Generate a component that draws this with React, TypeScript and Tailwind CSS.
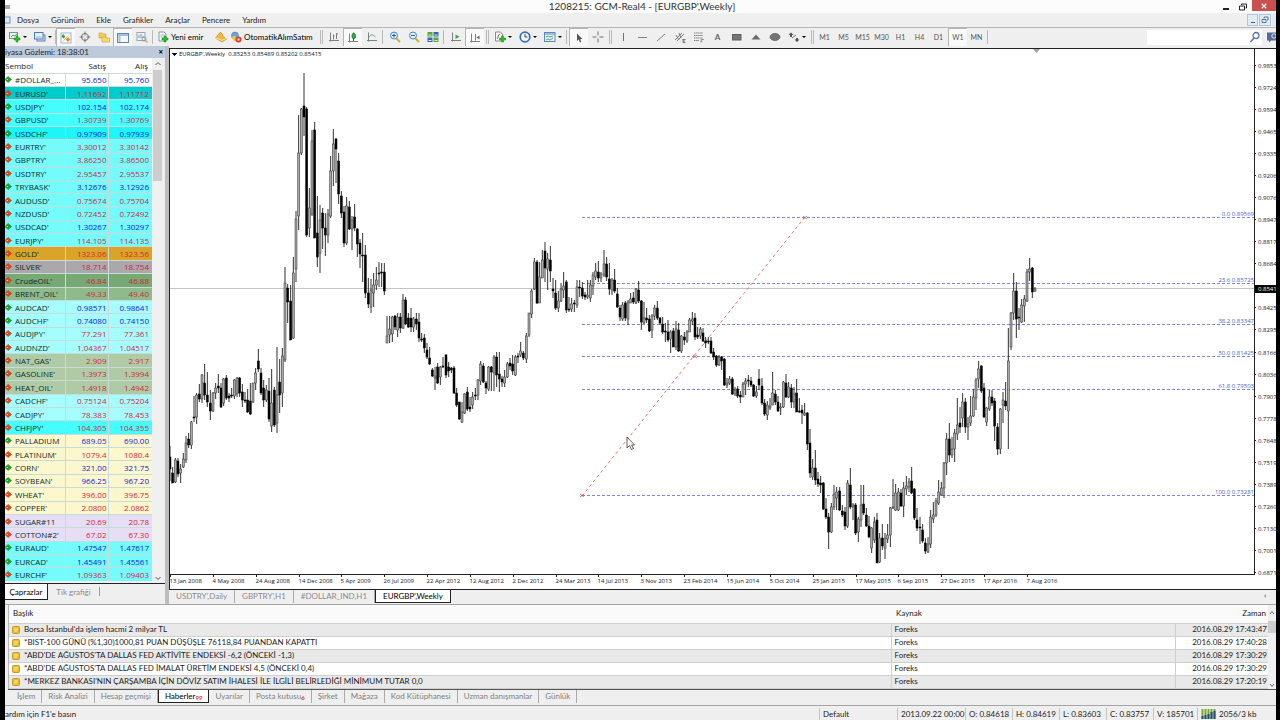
import React, { useState } from 'react';
import clsx from 'clsx';

// --- Market watch data ---
interface Quote {
  symbol: string;
  bid: string;
  ask: string;
  up: boolean;
  row: string;
}

const q = (symbol: string, bid: string, ask: string, up: boolean, row: string): Quote => ({
  symbol,
  bid,
  ask,
  up,
  row,
});

const CYAN = 'bg-[#46fdfd]';
const AQUA = 'bg-[#74fcfc]';
const PALE = 'bg-[#a6fdfd]';
const SAGE = 'bg-[#aecba6]';
const CREAM = 'bg-[#fdf7cd]';
const LILAC = 'bg-[#e5def5]';

const quotes: Quote[] = [
  q('#DOLLAR_...', '95.650', '95.760', true, 'bg-white'),
  q("EURUSD'", '1.11692', '1.11712', false, 'bg-[#00cccc]'),
  q("USDJPY'", '102.154', '102.174', true, CYAN),
  q("GBPUSD'", '1.30739', '1.30769', false, CYAN),
  q("USDCHF'", '0.97909', '0.97939', true, 'bg-[#1cf6f6]'),
  q("EURTRY'", '3.30012', '3.30142', false, AQUA),
  q("GBPTRY'", '3.86250', '3.86500', false, AQUA),
  q("USDTRY'", '2.95457', '2.95537', false, AQUA),
  q("TRYBASK'", '3.12676', '3.12926', true, AQUA),
  q("AUDUSD'", '0.75674', '0.75704', false, AQUA),
  q("NZDUSD'", '0.72452', '0.72492', false, AQUA),
  q("USDCAD'", '1.30267', '1.30297', true, AQUA),
  q("EURJPY'", '114.105', '114.135', false, AQUA),
  q("GOLD'", '1323.06', '1323.56', false, 'bg-[#d9a427]'),
  q("SILVER'", '18.714', '18.754', false, 'bg-[#aaa8aa]'),
  q("CrudeOIL'", '46.84', '46.88', false, 'bg-[#76a973]'),
  q("BRENT_OIL'", '49.33', '49.40', false, 'bg-[#8fba8b]'),
  q("AUDCAD'", '0.98571', '0.98641', true, PALE),
  q("AUDCHF'", '0.74080', '0.74150', true, PALE),
  q("AUDJPY'", '77.291', '77.361', false, PALE),
  q("AUDNZD'", '1.04367', '1.04517', false, PALE),
  q("NAT_GAS'", '2.909', '2.917', false, SAGE),
  q("GASOLINE'", '1.3973', '1.3994', false, SAGE),
  q("HEAT_OIL'", '1.4918', '1.4942', false, SAGE),
  q("CADCHF'", '0.75124', '0.75204', false, PALE),
  q("CADJPY'", '78.383', '78.453', false, PALE),
  q("CHFJPY'", '104.305', '104.355', false, CYAN),
  q('PALLADIUM', '689.05', '690.00', true, CREAM),
  q("PLATINUM'", '1079.4', '1080.4', false, CREAM),
  q("CORN'", '321.00', '321.75', true, CREAM),
  q("SOYBEAN'", '966.25', '967.20', true, CREAM),
  q("WHEAT'", '396.00', '396.75', false, CREAM),
  q("COPPER'", '2.0800', '2.0862', false, CREAM),
  q('SUGAR#11', '20.69', '20.78', false, LILAC),
  q("COTTON#2'", '67.02', '67.30', false, LILAC),
  q("EURAUD'", '1.47547', '1.47617', true, AQUA),
  q("EURCAD'", '1.45491', '1.45561', true, AQUA),
  q("EURCHF'", '1.09363', '1.09403', false, AQUA),
];

// --- Weekly candles: high, low, open, close (chart y, smaller is higher) ---
const candles: number[][] = [
  [446,481,457,469],[467,483,473,483],[458,483,482,460],[458,477,461,474],[464,483,473,469],[453,468,467,459],
  [436,463,460,443],[433,448,439,445],[421,449,445,422],[396,422,417,418],[393,424,417,395],[384,402,394,399],
  [374,403,399,375],[364,400,383,395],[372,407,395,402],[390,420,403,411],[392,412,411,393],[383,399,393,388],
  [374,393,386,388],[383,408,388,407],[378,406,403,379],[375,400,378,398],[393,402,396,398],[388,398,395,396],
  [379,399,396,380],[377,397,394,378],[377,397,378,393],[384,407,392,400],[392,403,400,401],[389,413,400,412],
  [383,415,401,414],[383,403,402,383],[368,390,383,373],[349,372,361,369],[368,395,373,393],[380,407,388,400],
  [385,402,400,390],[378,422,391,419],[369,432,426,403],[387,427,390,425],[347,433,423,395],[359,413,382,395],
  [348,407,393,356],[267,362,360,283],[284,323,288,302],[285,340,301,340],[257,339,338,273],[211,282,269,219],
  [115,230,216,153],[108,155,153,109],[73,136,106,117],[107,237,109,235],[188,237,228,208],[130,216,214,141],
  [122,238,130,238],[196,267,233,257],[205,273,253,220],[208,249,213,228],[213,256,228,235],[209,243,235,214],
  [156,218,216,171],[129,186,171,144],[138,183,139,149],[153,204,161,194],[191,218,196,213],[206,247,212,243],
  [197,245,243,206],[201,230,207,229],[216,250,229,220],[204,231,217,228],[228,257,229,244],[239,268,243,254],
  [233,282,255,256],[245,298,255,293],[278,308,293,304],[279,313,307,290],[273,307,293,285],[267,290,285,280],
  [262,287,273,274],[263,287,272,273],[263,295,272,291],[316,343,343,336],[316,343,335,329],[316,342,334,317],
  [315,330,316,327],[313,337,330,317],[313,333,317,328],[294,329,328,300],[297,325,300,324],[313,328,318,327],
  [308,332,318,327],[317,332,327,319],[313,330,319,324],[313,342,322,338],[333,342,339,340],[334,353,338,348],
  [343,359,350,357],[347,365,358,364],[368,377,370,376],[367,390,378,376],[363,384,367,383],[366,385,377,367],
  [357,368,366,367],[354,378,355,375],[362,377,367,371],[367,373,368,370],[366,394,368,393],[388,407,393,405],
  [402,420,402,419],[402,423,422,412],[393,414,413,394],[387,411,392,409],[397,412,407,409],[392,409,405,397],
  [388,400,395,396],[379,400,395,380],[361,385,381,364],[363,383,366,382],[381,394,383,388],[366,391,389,367],
  [366,391,367,372],[355,391,373,357],[352,387,357,375],[352,392,374,379],[376,387,379,382],[370,387,383,377],
  [362,378,377,364],[358,370,363,366],[355,375,364,371],[355,376,375,357],[353,363,356,357],[342,357,355,351],
  [351,360,353,358],[333,363,359,336],[313,337,335,313],[289,318,314,291],[258,290,289,262],[260,304,262,303],
  [262,303,303,277],[250,278,278,260],[242,282,251,268],[253,290,269,259],[246,282,260,271],[278,298,289,291],
  [280,310,293,308],[291,312,308,301],[283,302,301,289],[272,298,290,286],[280,313,282,310],[297,312,309,310],
  [298,312,309,304],[300,312,303,304],[280,308,305,287],[280,297,287,288],[282,299,288,296],[292,300,295,297],
  [280,299,297,295],[280,302,298,285],[272,295,286,275],[263,280,277,271],[261,282,272,278],[272,282,278,274],
  [250,277,275,264],[257,281,264,277],[263,295,279,289],[278,295,290,280],[269,293,280,291],[288,308,294,307],
  [305,321,308,317],[302,321,319,305],[301,321,303,318],[300,325,319,302],[293,303,303,299],[292,304,298,302],
  [288,304,303,289],[281,303,290,301],[300,330,301,322],[302,324,323,318],[308,323,318,320],[315,332,319,331],
  [314,338,330,316],[305,320,316,308],[301,320,308,318],[317,325,318,323],[317,334,324,332],[323,342,331,332],
  [320,342,332,340],[330,353,339,332],[328,347,331,347],[321,350,347,329],[323,352,330,351],[335,353,351,336],
  [332,345,337,340],[330,343,341,332],[318,332,332,320],[312,325,321,319],[313,340,318,337],[327,339,335,337],
  [327,339,336,329],[328,342,333,341],[337,348,341,343],[337,344,341,342],[337,354,341,353],[348,360,352,357],
  [355,367,356,365],[355,366,365,357],[356,370,357,361],[358,386,359,385],[378,388,385,383],[376,385,383,379],
  [377,395,379,394],[387,396,394,390],[386,398,389,396],[391,403,395,397],[382,397,397,384],[378,395,384,381],
  [375,387,380,381],[377,387,381,385],[384,397,385,396],[386,398,396,392],[369,390,379,385],[378,405,386,403],
  [399,416,403,414],[401,420,415,405],[398,410,408,406],[372,405,405,393],[390,405,394,402],[396,412,402,411],
  [403,415,408,407],[381,408,407,382],[374,398,383,397],[382,398,397,387],[384,408,388,402],[387,408,402,394],
  [379,412,393,412],[398,413,411,412],[405,424,410,413],[403,416,415,413],[412,450,413,444],[429,478,443,473],
  [459,480,477,468],[450,485,468,480],[472,487,479,484],[476,493,483,485],[482,510,483,509],[498,519,509,517],
  [513,549,517,532],[503,533,532,507],[485,510,507,494],[487,510,498,492],[487,511,491,510],[505,517,511,515],
  [507,530,512,526],[480,528,526,483],[468,509,485,507],[503,520,507,505],[503,535,505,533],[517,542,532,519],
  [485,527,520,505],[485,515,504,513],[508,527,515,526],[516,538,526,537],[527,553,548,528],[517,543,540,522],
  [513,563,520,563],[533,563,562,538],[524,550,538,546],[533,559,548,538],[524,543,539,535],[507,547,535,508],
  [479,509,508,507],[484,511,510,493],[488,511,510,492],[489,507,493,506],[482,517,506,488],[476,495,489,486],
  [478,492,487,482],[467,494,481,493],[488,520,489,518],[508,531,520,528],[517,544,527,528],[524,543,530,541],
  [538,554,543,551],[537,553,552,544],[510,548,544,517],[502,523,519,515],[498,517,515,501],[480,505,503,492],
  [482,496,495,488],[462,498,488,463],[433,475,463,439],[423,462,439,455],[437,458,455,449],[429,462,449,433],
  [398,440,434,425],[407,433,423,427],[393,427,418,402],[398,433,402,427],[417,440,427,424],[396,426,423,416],
  [389,417,416,397],[378,410,398,380],[361,388,379,369],[365,393,366,391],[383,418,388,417],[407,426,422,408],
  [390,411,409,397],[390,406,397,403],[398,441,401,426],[423,455,427,449],[408,454,449,409],[392,423,405,400],
  [382,410,401,406],[328,449,411,361],[312,350,347,313],[273,320,313,291],[282,338,291,319],[308,330,317,318],
  [299,323,322,305],[295,322,306,299],[269,302,301,272],[258,281,272,269],[267,298,268,292],[287,292,291,289],
];

const CHART_TOP = 49;
const BAR_STEP = 2.678;

const fibLevels = [
  { y: 217, label: '0.0 0.89569' },
  { y: 283, label: '23.6 0.85725' },
  { y: 324, label: '38.2 0.83347' },
  { y: 356, label: '50.0 0.81425' },
  { y: 389, label: '61.8 0.79503' },
  { y: 495, label: '100.0 0.73281' },
];

const dates = [
  '13 Jan 2008', '4 May 2008', '24 Aug 2008', '14 Dec 2008', '5 Apr 2009', '26 Jul 2009', '22 Apr 2012',
  '12 Aug 2012', '2 Dec 2012', '24 Mar 2013', '14 Jul 2013', '3 Nov 2013', '23 Feb 2014', '15 Jun 2014',
  '5 Oct 2014', '25 Jan 2015', '17 May 2015', '6 Sep 2015', '27 Dec 2015', '17 Apr 2016', '7 Aug 2016',
];

const prices = [
  '0.9853', '0.9724', '0.9594', '0.9465', '0.9335', '0.9206', '0.9076', '0.8947', '0.8817', '0.8684', '',
  '0.8425', '0.8295', '0.8166', '0.8036', '0.7907', '0.7778', '0.7648', '0.7519', '0.7389', '0.7260', '0.7130',
  '0.7001', '0.6871',
];

const news = [
  ["Borsa İstanbul'da işlem hacmi 2 milyar TL", '2016.08.29 17:43:47'],
  ['*BIST-100 GÜNÜ (%1,30)1000,81 PUAN DÜŞÜŞLE 76118,84 PUANDAN KAPATTI', '2016.08.29 17:40:28'],
  ["*ABD'DE AĞUSTOS'TA DALLAS FED AKTİVİTE ENDEKSİ -6,2 (ÖNCEKİ -1,3)", '2016.08.29 17:30:29'],
  ["*ABD'DE AĞUSTOS'TA DALLAS FED İMALAT ÜRETİM ENDEKSİ 4,5 (ÖNCEKİ 0,4)", '2016.08.29 17:30:29'],
  ["*MERKEZ BANKASI'NIN ÇARŞAMBA İÇİN DÖVİZ SATIM İHALESİ İLE İLGİLİ BELİRLEDİĞİ MİNİMUM TUTAR 0,0", '2016.08.29 17:20:19'],
];

// --- Toolbar icons, all on a 12 unit grid ---
const Icon = ({ children }: { children: React.ReactNode }) => (
  <svg viewBox="0 0 12 12" className="h-3 w-3 shrink-0" fill="none" aria-hidden="true">
    {children}
  </svg>
);

const Plus = ({ x, y }: { x: number; y: number }) => (
  <path
    d={`M${x + 2} ${y}h2v2h2v2h-2v2h-2v-2h-2v-2h2z`}
    fill="#22c322"
    stroke="#0d8a14"
    strokeWidth="0.5"
  />
);

const icons: Record<string, React.ReactNode> = {
  newChart: (
    <>
      <rect x="0.5" y="1.5" width="8" height="6" fill="#f4f8f4" stroke="#6f8fa6" />
      <path d="M2 6l2-2 1.500 1L8 3" stroke="#39a34a" />
      <Plus x={5} y={5} />
    </>
  ),
  profiles: (
    <>
      <rect x="3" y="4" width="8" height="6" fill="#cfe0f1" stroke="#5d86b4" />
      <rect x="0.5" y="1.5" width="8.500" height="6.500" fill="#e7f1fa" stroke="#4a7cb5" />
      <path d="M2 6h5.500" stroke="#8fb2d8" />
    </>
  ),
  marketWatch: (
    <>
      <rect x="1" y="1" width="10" height="10" fill="#fff" stroke="#9fb3c9" />
      <path d="M3 2l2.500 2.500L3.500 6.500 1.500 4.500z" fill="#3aa03a" />
      <path d="M8 5l2.500 2.500L8 10 5.500 7.500z" fill="#e88b3c" />
      <path d="M3 9.500l5-6" stroke="#e6c24a" />
    </>
  ),
  dataWindow: (
    <>
      <circle cx="6" cy="6" r="3.500" stroke="#777" />
      <path d="M6 0.500v4M6 7.500v4M0.500 6h4M7.500 6h4" stroke="#777" />
    </>
  ),
  navigator: (
    <>
      <path d="M1 2h3l1 1h3v4H1z" fill="#f5cf56" stroke="#c9962a" strokeWidth="0.6" />
      <path d="M4 6h3l1 1h3.500v4H4z" fill="#f9dc7a" stroke="#c9962a" strokeWidth="0.6" />
    </>
  ),
  terminal: (
    <>
      <rect x="0.500" y="1.500" width="11" height="9" fill="#f5f9fd" stroke="#5b87b8" />
      <path d="M1 3h10" stroke="#5b87b8" />
      <path d="M2.500 4v6" stroke="#a1c0e0" strokeWidth="2" />
    </>
  ),
  tester: (
    <>
      <rect x="1" y="1.500" width="8" height="8" fill="#eef2f6" stroke="#98a5b3" />
      <path d="M3 7V4M5 7V3M7 7V5" stroke="#8496a8" />
      <circle cx="8" cy="8" r="2" stroke="#8a97a4" />
      <path d="M9.500 9.500l2 2" stroke="#cfa650" strokeWidth="1.300" />
    </>
  ),
  order: (
    <>
      <path d="M2 1h5l2 2v7H2z" fill="#fbfbfb" stroke="#8b98a5" />
      <path d="M3.500 4h4M3.500 6h2" stroke="#9ba8b5" />
      <Plus x={5} y={5} />
    </>
  ),
  editor: (
    <>
      <path d="M0.500 7l4.500-5.500 2 1 1 3 3.500 2.500L7 11z" fill="#f0bb3c" stroke="#b78418" strokeWidth="0.7" />
      <path d="M1 7l6 2.500 4-2" stroke="#fbe6a3" />
    </>
  ),
  autoTrade: (
    <>
      <circle cx="5" cy="4.500" r="3.500" fill="#67a8dc" stroke="#3b7cb5" strokeWidth="0.6" />
      <path d="M0.500 6l4.500-1 4 3-4 2.500z" fill="#efc24b" />
      <circle cx="8.500" cy="8.500" r="3" fill="#dd3b26" />
      <rect x="7.500" y="7.500" width="2" height="2" fill="#fff" />
    </>
  ),
  bars: <path d="M2.500 1.500v9M1 9.500h10M5.500 8.500v-5M8.500 8V2M5.500 5h1M8.500 3h1.500" stroke="#808080" />,
  candleChart: (
    <>
      <path d="M2.500 1.500v9M1 9.500h10" stroke="#808080" />
      <path d="M6.500 0.500v8.500" stroke="#16752b" />
      <rect x="5" y="1.500" width="3.500" height="5" rx="1.500" fill="#35ad4c" stroke="#16752b" strokeWidth="0.7" />
    </>
  ),
  lineChart: (
    <>
      <path d="M2.500 1.500v9M1 9.500h10" stroke="#808080" />
      <path d="M2.500 7c2-4 4-4 7-1" stroke="#5aa96b" />
    </>
  ),
  zoomIn: (
    <>
      <path d="M7.500 7.500l3.500 3.500" stroke="#d4ad3c" strokeWidth="2" />
      <circle cx="5" cy="4.500" r="3.500" fill="#e4f1fc" stroke="#4187c4" />
      <path d="M3 4.500h4M5 2.500v4" stroke="#2767a8" />
    </>
  ),
  zoomOut: (
    <>
      <path d="M7.500 7.500l3.500 3.500" stroke="#d4ad3c" strokeWidth="2" />
      <circle cx="5" cy="4.500" r="3.500" fill="#e4f1fc" stroke="#4187c4" />
      <path d="M3 4.500h4" stroke="#2767a8" />
    </>
  ),
  tile: (
    <>
      <path d="M0.500 1h5v4.500h-5z" fill="#54a53c" />
      <path d="M6.500 1h5v4.500h-5z" fill="#3568bb" />
      <path d="M0.500 6.500h5V11h-5z" fill="#3568bb" />
      <path d="M6.500 6.500h5V11h-5z" fill="#54a53c" />
      <path d="M1.500 4h3M7.500 4h3M1.500 9.500h3M7.500 9.500h3" stroke="#f1f3b5" />
    </>
  ),
  autoScroll: (
    <>
      <path d="M2.500 1.500v9M1 9.500h10" stroke="#808080" />
      <path d="M5.500 3.500l4 2.200-4 2.200z" fill="#3da14c" />
    </>
  ),
  shift: (
    <>
      <path d="M2.500 1.500v9M1 9.500h10M6.500 2v6.500" stroke="#808080" />
      <path d="M10.500 3.500L7.500 5.500l3 2z" fill="#55707f" />
    </>
  ),
  indicators: (
    <>
      <path d="M1.500 1h5l2 2v7h-7z" fill="#fafafa" stroke="#8c8c8c" />
      <path d="M3 8c1 0 1-5 3-5" stroke="#b34a4a" />
      <Plus x={5.5} y={5} />
    </>
  ),
  periods: (
    <>
      <circle cx="6" cy="6" r="4.800" fill="#f0f6fd" stroke="#2e6fbc" strokeWidth="1.700" />
      <path d="M6 3v3h2.500" stroke="#444" />
    </>
  ),
  templates: (
    <>
      <rect x="0.500" y="1.500" width="10.500" height="9" fill="#e6f0f9" stroke="#5c8ab8" />
      <path d="M1 3h10" stroke="#5c8ab8" />
      <path d="M2 6l2-1 2 1 3-1M2 9l2-1 2 1 3-2" stroke="#5fa472" />
    </>
  ),
  pointer: <path d="M4 1.500v7.500l1.800-1.500L7 10.500l1.300-.6L7.200 7h2.300z" fill="#555" />,
  crosshair: <path d="M6 0.500v4M6 7.500v4M0.500 6h4M7.500 6h4" stroke="#707070" />,
  vline: <path d="M6.500 2v8" stroke="#707070" />,
  hline: <path d="M2 6.500h9" stroke="#808080" />,
  trend: <path d="M2 10l8-7" stroke="#808080" />,
  channel: (
    <path d="M1 9l7-7M3 10l7-7M2 4l3 5M5 2l2 5M9 8.500h2.500M9 8v3.500h2.500M9 10h2" stroke="#6c6c6c" strokeWidth="0.9" />
  ),
  fibo: (
    <path d="M1 2h9M1 4.500h9M1 7h9M1 9.500h5M8 11.500v-3h3M8 10h2" stroke="#7c7c7c" strokeDasharray="1.500 0.600" />
  ),
  rect: <rect x="1.500" y="3.500" width="8.500" height="5.500" fill="#757575" stroke="#5f5f5f" />,
  triangle: <path d="M6 3.500l4.500 5h-9z" fill="#6b6b6b" />,
  ellipse: <ellipse cx="6" cy="6" rx="5" ry="3.500" fill="#757575" stroke="#5f5f5f" strokeWidth="0.800" />,
  arrows: (
    <>
      <path d="M3 1.500l2.500 2.500H4v2H2V4H.5zM9 11L6.500 8.500H8V7h2v1.500h1.500z" fill="#555" />
      <path d="M4 7l4-3" stroke="#777" />
    </>
  ),
};

interface ToolProps {
  icon: string;
  label: string;
  menu?: boolean;
  pressed?: boolean;
}

const Tool: React.FC<ToolProps> = ({ icon, label, menu, pressed }) => (
  <button
    type="button"
    aria-label={label}
    title={label}
    className={clsx(
      'flex h-full shrink-0 items-center justify-center gap-0.5',
      menu ? 'w-[25px]' : 'w-[19px]',
      pressed && 'border-t border-l border-[#b4b4b4] bg-[#f9f9f9]'
    )}
  >
    <Icon>{icons[icon]}</Icon>
    {menu && <span className="border-x-2 border-t-2 border-x-transparent border-t-black" />}
  </button>
);

const Sep = ({ grip }: { grip?: boolean }) => (
  <span
    className={clsx(
      'h-[14px] shrink-0 border-l border-[#b9b9b9]',
      grip ? 'mr-px ml-0.5 w-[3px] border-r' : 'mx-px w-0.5'
    )}
  />
);

const Toolbar: React.FC = () => {
  const [frame, setFrame] = useState('W1');
  const frames = ['M1', 'M5', 'M15', 'M30', 'H1', 'H4', 'D1', 'W1', 'MN'];

  return (
    <div className="flex h-[19px] items-center border-t border-[#b5b5b5] bg-[#efefef]">
      <Tool icon="newChart" label="Yeni grafik" menu />
      <Tool icon="profiles" label="Profiller" menu />
      <span className="h-[14px] w-px shrink-0 bg-[#b9b9b9]" />
      <Tool icon="marketWatch" label="Piyasa Gözlemi" pressed />
      <Tool icon="dataWindow" label="Veri penceresi" />
      <Tool icon="navigator" label="Kılavuz" />
      <Tool icon="terminal" label="Terminal" pressed />
      <Tool icon="tester" label="Strateji testi" />
      <Sep />
      <button type="button" className="flex h-full w-[56px] shrink-0 items-center gap-0.5 pl-0.5 text-[8px]">
        <Icon>{icons.order}</Icon>
        <span className="whitespace-nowrap">Yeni emir</span>
      </button>
      <Tool icon="editor" label="MetaEditor" />
      <button type="button" className="flex h-full w-[88px] shrink-0 items-center gap-0.5 text-[8px]">
        <Icon>{icons.autoTrade}</Icon>
        <span className="whitespace-nowrap">OtomatikAlımSatım</span>
      </button>
      <Sep grip />
      <Tool icon="bars" label="Çubuk grafik" />
      <Tool icon="candleChart" label="Mum grafik" pressed />
      <Tool icon="lineChart" label="Çizgi grafik" />
      <Sep />
      <Tool icon="zoomIn" label="Yakınlaştır" />
      <Tool icon="zoomOut" label="Uzaklaştır" />
      <Tool icon="tile" label="Döşe" />
      <Sep />
      <Tool icon="autoScroll" label="Otomatik kaydırma" />
      <Tool icon="shift" label="Grafik kaydırma" pressed />
      <Sep grip />
      <Tool icon="indicators" label="Göstergeler" menu />
      <Tool icon="periods" label="Periyotlar" menu />
      <Tool icon="templates" label="Şablonlar" menu />
      <Sep />
      <Tool icon="pointer" label="İmleç" pressed />
      <Tool icon="crosshair" label="Artı imleç" />
      <Sep grip />
      <Tool icon="vline" label="Dikey çizgi" />
      <Tool icon="hline" label="Yatay çizgi" />
      <Tool icon="trend" label="Trend çizgisi" />
      <Tool icon="channel" label="Kanal" />
      <Tool icon="fibo" label="Fibonacci" />
      <button type="button" className="h-full w-[19px] shrink-0 text-[8px] font-bold text-[#666]">
        A
      </button>
      <Tool icon="rect" label="Dikdörtgen" />
      <Tool icon="triangle" label="Üçgen" />
      <Tool icon="ellipse" label="Elips" />
      <Tool icon="arrows" label="Oklar" menu />
      <Sep grip />
      {frames.map((f) => (
        <button
          key={f}
          type="button"
          onClick={() => setFrame(f)}
          className={clsx(
            'h-full w-[19px] shrink-0 text-[7px] text-[#555]',
            frame === f && 'border-t border-l border-[#b4b4b4] bg-[#f9f9f9]'
          )}
        >
          {f}
        </button>
      ))}
      <Sep />
      <div className="ml-auto flex h-[15px] w-[115px] items-center bg-white">
        <input type="text" aria-label="Ara" className="h-full w-0 flex-1 bg-white px-1 text-[8px] outline-none" />
        <svg viewBox="0 0 12 12" className="mr-px h-3 w-3" fill="none" aria-hidden="true">
          <circle cx="7" cy="4.500" r="3" stroke="#5671ab" strokeWidth="1.300" />
          <path d="M5 7l-3.500 4" stroke="#5671ab" strokeWidth="1.500" />
        </svg>
      </div>
      <button type="button" aria-label="Sohbet" className="ml-1 flex w-[10px] items-center">
        <svg viewBox="0 0 10 12" className="h-3 w-[10px]" fill="none" aria-hidden="true">
          <path d="M1 1.500h9v8H5L3 11.500v-2H1z" fill="#54699d" />
          <circle cx="8" cy="5" r="2.200" stroke="#dfe5f2" />
        </svg>
      </button>
    </div>
  );
};

const Chart: React.FC = () => (
  <div className="flex h-[541px] border-t border-l border-[#222] bg-white font-['Open_Sans','Noto_Sans',sans-serif]">
    <svg className="block h-full w-0 flex-1" role="img" aria-label="EURGBP Weekly">
      <g shapeRendering="crispEdges">
        <path d="M2 4h5l-2.500 3z" fill="#111" />
        <line x1="0" x2="100%" y1="239.500" y2="239.500" stroke="#c4c4c4" />
        {fibLevels.map((f) => (
          <line
            key={f.label}
            x1="412"
            x2="100%"
            y1={f.y - CHART_TOP + 0.5}
            y2={f.y - CHART_TOP + 0.5}
            stroke="#8089cf"
            strokeDasharray="3 2"
          />
        ))}
      </g>
      <path d="M412 447L635 168" stroke="#e06060" strokeWidth="0.900" strokeDasharray="3 3" />
      <path d="M410 445l4 3M410 448l4-3M633 167l4 3M633 170l4-3M523 306l4 3M523 309l4-3" stroke="#d24343" strokeWidth="0.700" />
      {/* hollow bodies are rising weeks, filled bodies are falling weeks */}
      {candles.map(([high, low, open, close], i) => {
        const x = Math.round(i * BAR_STEP * 3) / 3;
        const top = Math.min(open, close) - CHART_TOP;
        const height = Math.max(Math.abs(open - close), 1);
        const rising = close < open;
        return (
          <g key={i}>
            <line x1={x} x2={x} y1={high - CHART_TOP} y2={low - CHART_TOP} stroke="#1a1a1a" strokeWidth="0.900" />
            <rect
              x={x - 1}
              y={top}
              width="2"
              height={height}
              fill={rising ? '#a9a9a9' : '#000'}
              stroke={rising ? '#2c2c2c' : '#000'}
              strokeWidth="0.500"
            />
          </g>
        );
      })}
      <g fontSize="6" fill="#4a5fc4" textAnchor="end">
        {fibLevels.map((f) => (
          <text key={f.label} x="100%" y={f.y - CHART_TOP - 1}>
            {f.label}
          </text>
        ))}
      </g>
      <text x="9" y="7" fontSize="6" fill="#111">
        EURGBP',Weekly&nbsp; 0.85253 0.85489 0.85202 0.85415
      </text>
      <path d="M863 0h7l-3.500 4z" fill="#a5a5a5" />
      {/* mouse cursor */}
      <path d="M457 388v11l2.500-2.500 2 4 2-1-2-3.500h3z" fill="#fff" stroke="#333" strokeWidth="0.800" />
      {/* time axis */}
      <line x1="0" x2="100%" y1="525.500" y2="525.500" stroke="#222" shapeRendering="crispEdges" />
      {dates.map((d, i) => {
        const x = Math.round(i * BAR_STEP * 16);
        return (
          <g key={d}>
            <path d={`M${x + 0.5} 525v3`} stroke="#222" />
            <text x={x - 0.5} y="534" fontSize="6" fill="#111">
              {d}
            </text>
          </g>
        );
      })}
    </svg>
    {/* price axis */}
    <svg className="block h-full w-[22px] shrink-0" aria-label="Fiyat">
      <line x1="0.500" x2="0.500" y1="0" y2="526" stroke="#222" shapeRendering="crispEdges" />
      <g fontSize="6" fill="#111">
        {prices.map((p, i) => {
          const y = Math.round(17 + i * 22.04);
          return p ? (
            <g key={p}>
              <path d={`M0 ${y - 0.5}h2`} stroke="#222" />
              <text x="4" y={y + 2}>
                {p}
              </text>
            </g>
          ) : null;
        })}
      </g>
      <rect x="1" y="236" width="21" height="8" fill="#000" />
      <text x="4" y="242" fontSize="6" fill="#fff">
        0.8541
      </text>
    </svg>
  </div>
);

const MarketWatch: React.FC = () => (
  <section className="flex w-[160px] shrink-0 flex-col bg-[#efefef] font-['Open_Sans','Noto_Sans',sans-serif]">
    <div className="flex h-3 items-center justify-between bg-[#bccadb] pr-0.5 text-[8px] text-[#222]">
      <span className="whitespace-nowrap font-['Lato',sans-serif]">iyasa Gözlemi: 18:38:01</span>
      <button type="button" aria-label="Kapat" className="font-bold text-black">
        ×
      </button>
    </div>
    <div className="flex h-[525px] overflow-hidden">
      <table className="h-[523px] w-[147px] shrink-0 table-fixed border-collapse text-[8px] leading-[11px]">
        <thead>
          <tr className="h-[15px] bg-white text-[#222]">
            <th className="w-[60px] text-left font-normal">Sembol</th>
            <th className="w-[43px] pr-0.5 text-right font-normal">Satış</th>
            <th className="pr-1 text-right font-normal">Alış</th>
          </tr>
        </thead>
        <tbody>
          {quotes.map((item) => (
            <tr key={item.symbol} className={clsx('border-t border-[#c8dada] whitespace-nowrap', item.row)}>
              <td className="border-r border-[#c8dada] p-0 text-[#112b2b]">
                <span className="flex items-center gap-[3px]">
                  <svg viewBox="0 0 7 7" className="h-[7px] w-[7px] shrink-0" aria-hidden="true">
                    <path
                      d="M0 3.500L3 0.500l3.500 3L3 6.500z"
                      fill={item.up ? '#1fa52f' : '#e04a1c'}
                      stroke={item.up ? '#137a20' : '#a82f10'}
                      strokeWidth="0.600"
                    />
                    <path d="M1.500 3.500h1.500" stroke="#fff" strokeWidth="0.700" />
                  </svg>
                  {item.symbol}
                </span>
              </td>
              <td
                className={clsx(
                  'border-r border-[#c8dada] p-0 pr-px text-right',
                  item.up ? 'text-[#1420d8]' : 'text-[#d2263c]'
                )}
              >
                {item.bid}
              </td>
              <td className={clsx('p-0 pr-[3px] text-right', item.up ? 'text-[#1420d8]' : 'text-[#d2263c]')}>
                {item.ask}
              </td>
            </tr>
          ))}
        </tbody>
      </table>
      <div className="flex w-[11px] flex-col items-center bg-[#f0f0f0]">
        <svg viewBox="0 0 8 8" className="my-0.5 h-2 w-2 shrink-0" fill="none" aria-hidden="true">
          <path d="M1.500 5L4 2.500 6.500 5" stroke="#555" />
        </svg>
        <div className="h-[111px] w-[9px] bg-[#cdcdcd]" />
        <svg viewBox="0 0 8 8" className="mt-auto mb-px h-2 w-2 shrink-0" fill="none" aria-hidden="true">
          <path d="M1.500 3L4 5.500 6.500 3" stroke="#555" />
        </svg>
      </div>
    </div>
    <div className="flex items-start border-t border-[#222] font-['Lato',sans-serif] text-[8px]">
      <button type="button" className="h-4 w-[43px] border-r border-b border-[#222] bg-white">
        Çaprazlar
      </button>
      <button type="button" className="h-4 w-[51px] text-[#8c8c8c]">
        Tik grafiği
      </button>
      <span className="mt-[3px] h-[9px] w-px bg-[#999]" />
    </div>
  </section>
);

const ChartTabs: React.FC = () => {
  const [tab, setTab] = useState("EURGBP',Weekly");
  const tabs = ["USDTRY',Daily", "GBPTRY',H1", '#DOLLAR_IND,H1', "EURGBP',Weekly"];
  return (
    <div className="flex h-[15px] items-start border-t border-[#222] text-[8px]">
      {tabs.map((t) => (
        <button
          key={t}
          type="button"
          onClick={() => setTab(t)}
          className={clsx(
            'h-[13px] px-[7px] leading-[13px] whitespace-nowrap',
            tab === t ? 'border-x border-b border-[#222] bg-white text-black' : 'border-r border-[#aaa] text-[#8c8c8c]'
          )}
        >
          {t}
        </button>
      ))}
      <span className="mt-1 mr-[10px] ml-auto border-y-2 border-r-2 border-y-transparent border-r-[#999]" />
    </div>
  );
};

const Terminal: React.FC = () => {
  const [tab, setTab] = useState('Haberler');
  const tabs: { name: string; badge?: number }[] = [
    { name: 'İşlem' },
    { name: 'Risk Analizi' },
    { name: 'Hesap geçmişi' },
    { name: 'Haberler', badge: 99 },
    { name: 'Uyarılar' },
    { name: 'Posta kutusu', badge: 6 },
    { name: 'Şirket' },
    { name: 'Mağaza' },
    { name: 'Kod Kütüphanesi' },
    { name: 'Uzman danışmanlar' },
    { name: 'Günlük' },
  ];

  return (
    <section className="border-t border-[#a5a5a5] bg-[#efefef] pl-[3px]">
      <div className="flex border-l border-[#b5b5b5]">
        <table className="h-[84px] w-0 flex-1 table-fixed border-collapse text-[8px] leading-[11px] text-[#222]">
          <thead>
            <tr className="h-[18px] border-b border-[#cfcfcf] bg-[#fafafa]">
              <th className="pl-1 text-left font-normal">Başlık</th>
              <th className="w-[284px] pl-[5px] text-left font-normal">Kaynak</th>
              <th className="w-[93px] pr-0.5 text-right font-normal">Zaman</th>
            </tr>
          </thead>
          <tbody>
            {news.map(([title, time]) => (
              <tr key={title} className="border-b border-[#cfcfcf] whitespace-nowrap odd:bg-[#e9e9e9] even:bg-white">
                <td className="border-r border-[#cfcfcf] p-0 pl-[3px]">
                  <span className="flex items-center gap-1">
                    <svg viewBox="0 0 8 8" className="h-2 w-2 shrink-0" aria-hidden="true">
                      <rect x="0.500" y="0.500" width="7" height="7" rx="1" fill="#e9bd2c" stroke="#c79c20" />
                      <path d="M2 3h4M2 5h3" stroke="#fbeaa5" />
                    </svg>
                    {title}
                  </span>
                </td>
                <td className="border-r border-[#cfcfcf] p-0 pl-[3px]">Foreks</td>
                <td className="p-0 pr-px text-right">{time}</td>
              </tr>
            ))}
          </tbody>
        </table>
        <div className="flex w-2 flex-col items-center bg-[#f0f0f0] text-[#555]">
          <svg viewBox="0 0 8 8" className="my-1 h-2 w-2" fill="none" aria-hidden="true">
            <path d="M2 5l2-2.500L6 5" stroke="#666" />
          </svg>
          <div className="h-3 w-full bg-[#cdcdcd]" />
          <svg viewBox="0 0 8 8" className="mt-auto h-2 w-2" fill="none" aria-hidden="true">
            <path d="M2 3l2 2.500L6 3" stroke="#666" />
          </svg>
        </div>
      </div>
      <div className="flex h-[16px] items-start border-t border-[#555] pl-[3px] text-[8px]">
        {tabs.map(({ name, badge }) => (
          <button
            key={name}
            type="button"
            onClick={() => setTab(name)}
            className={clsx(
              'flex h-[13px] px-[6px] leading-[12px] whitespace-nowrap',
              tab === name
                ? 'border-x border-b border-[#222] bg-white text-black'
                : 'border-r border-[#aaa] text-[#808080]'
            )}
          >
            {name}
            {badge && <span className="pt-[3px] text-[6px] leading-[9px] font-bold text-[#e03030]">{badge}</span>}
          </button>
        ))}
      </div>
    </section>
  );
};

const StatusBar: React.FC = () => (
  <footer className="flex h-4 items-center border-t border-[#a5a5a5] bg-[#efefef] text-[8px] whitespace-nowrap text-[#222]">
    <span className="flex-1">ardım için F1'e basın</span>
    <span className="w-[78px] border-l border-[#c4c4c4] pl-[3px]">Default</span>
    <span className="w-[68px] border-l border-[#c4c4c4] pl-[3px]">2013.09.22 00:00</span>
    <span className="w-[47px] border-l border-[#c4c4c4] pl-[3px]">O: 0.84618</span>
    <span className="w-[47px] border-l border-[#c4c4c4] pl-[3px]">H: 0.84619</span>
    <span className="w-[47px] border-l border-[#c4c4c4] pl-[3px]">L: 0.83603</span>
    <span className="w-[47px] border-l border-[#c4c4c4] pl-[3px]">C: 0.83757</span>
    <span className="w-[44px] border-l border-[#c4c4c4] pl-[3px]">V: 185701</span>
    <span className="flex w-[79px] items-center gap-0.5 border-l border-[#c4c4c4] pl-[3px]">
      <svg viewBox="0 0 16 10" className="h-[10px] w-4" aria-hidden="true">
        <path d="M1.500 10V0M4.500 10V0M7.500 10V0M10.500 10V0M13.500 10V0" stroke="#7ea52b" strokeWidth="2" />
        <path d="M1.500 10V7M4.500 10V6M7.500 10V5M10.500 10V3M13.500 10V2" stroke="#1f4f7c" strokeWidth="2" />
      </svg>
      2056/3 kb
    </span>
  </footer>
);

const App: React.FC = () => {
  const menu = ['Dosya', 'Görünüm', 'Ekle', 'Grafikler', 'Araçlar', 'Pencere', 'Yardım'];

  return (
    <div className="min-h-screen bg-black pr-1 pl-[5px] font-['Lato','Open_Sans',sans-serif] text-black">
      <div className="overflow-hidden bg-[#efefef]">
        {/* Title bar */}
        <header className="flex h-[13px] items-center bg-[#fcfcfc]">
          <svg viewBox="0 0 6 6" className="h-[6px] w-[6px]" aria-hidden="true">
            <path d="M0 1h5v4H0z" fill="#aaa" />
          </svg>
          <h1 className="flex-1 pl-[56px] text-center text-[10px] leading-[13px] text-[#333]">
            1208215: GCM-Real4 - [EURGBP',Weekly]
          </h1>
          <button type="button" aria-label="Simge durumuna küçült" className="flex w-[17px] justify-center">
            <span className="mt-1 h-0.5 w-[6px] bg-[#222]" />
          </button>
          <button type="button" aria-label="Önceki boyut" className="flex w-[18px] justify-center">
            <svg viewBox="0 0 8 8" className="h-2 w-2" fill="none" aria-hidden="true">
              <path d="M2.500 2V1h5v4h-1M0.500 3h5v4h-5z" stroke="#222" />
            </svg>
          </button>
          <button
            type="button"
            aria-label="Pencereyi kapat"
            className="flex h-[11px] w-6 items-center justify-center self-start bg-[#c9504f]"
          >
            <svg viewBox="0 0 8 8" className="h-[6px] w-[6px]" aria-hidden="true">
              <path d="M1 1l6 6M7 1L1 7" stroke="#fff" strokeWidth="1.500" />
            </svg>
          </button>
        </header>

        {/* Menu */}
        <nav className="flex h-[14px] items-center text-[8px] text-[#222]">
          <svg viewBox="0 0 6 8" className="h-2 w-[6px]" aria-hidden="true">
            <rect x="-1" y="1" width="6" height="6" fill="#dbe9f7" stroke="#6d95c1" />
          </svg>
          {menu.map((m) => (
            <button key={m} type="button" className="px-[6px] leading-[14px]">
              {m}
            </button>
          ))}
          <span className="ml-auto flex gap-px">
            <button type="button" aria-label="Grafiği küçült" className="flex h-3 w-[11px] items-end justify-center border border-[#b3c6d8] bg-[#e1ebf4] pb-0.5">
              <span className="h-px w-1 bg-[#345f8c]" />
            </button>
            <button type="button" aria-label="Grafiği geri yükle" className="flex h-3 w-3 items-center justify-center border border-[#b3c6d8] bg-[#e1ebf4]">
              <svg viewBox="0 0 8 8" className="h-2 w-2" fill="none" aria-hidden="true">
                <path d="M3 2.500V1h4v3H6M1 3.500h4v3H1z" stroke="#345f8c" strokeWidth="0.800" />
              </svg>
            </button>
            <span className="h-3 w-1 bg-[#e1ebf4]" />
          </span>
        </nav>

        <Toolbar />

        <main className="flex">
          <MarketWatch />
          <div className="flex min-w-0 flex-1 flex-col border-l-4 border-[#bdbdbd] pt-0.5">
            <Chart />
            <ChartTabs />
          </div>
        </main>

        <Terminal />
        <StatusBar />
      </div>
    </div>
  );
};

export default App;
